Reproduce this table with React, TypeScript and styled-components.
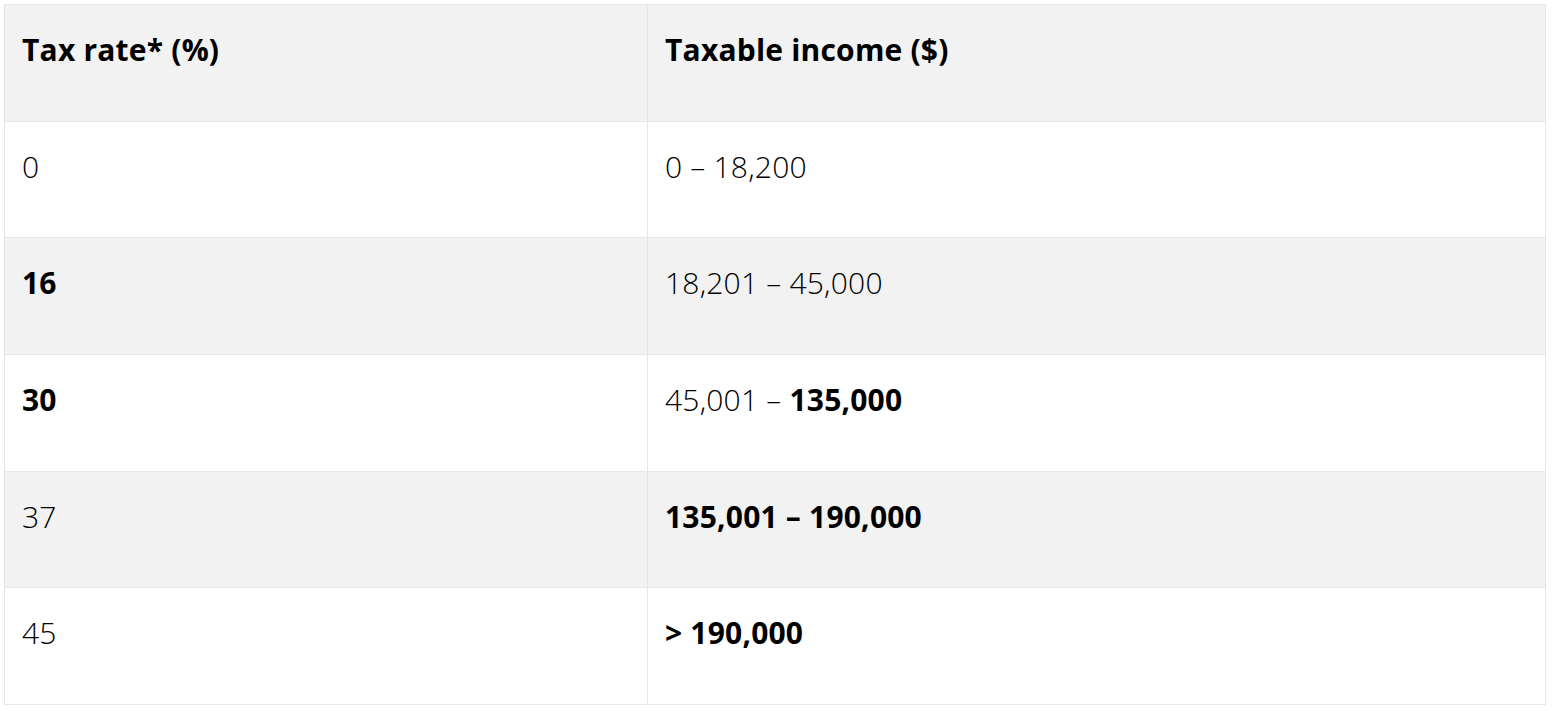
import React from "react";
import styled, { createGlobalStyle } from "styled-components";

const GlobalStyle = createGlobalStyle`
  html, body {
    margin: 0;
    padding: 0;
    background: #ffffff;
  }
  body {
    padding: 4px 7px 6px 4px;
    font-family: "Open Sans", "Noto Sans", "Liberation Sans", sans-serif;
    color: #000000;
  }
`;

const Table = styled.table`
  width: 1542px;
  border-collapse: collapse;
  table-layout: fixed;
  border: 1px solid #e3e6ea;
`;

const Row = styled.tr<{ $shaded?: boolean }>`
  height: 116.67px;
  background: ${(p) => (p.$shaded ? "#f2f2f2" : "#ffffff")};
`;

const Cell = styled.td<{ $wide?: boolean }>`
  box-sizing: border-box;
  width: ${(p) => (p.$wide ? "auto" : "643px")};
  border: 1px solid #e3e6ea;
  vertical-align: top;
  padding: 25px 18px 0 17px;
  font-size: 30px;
  line-height: 40px;
  font-weight: 300;
  letter-spacing: 0.2px;
  white-space: nowrap;
  text-align: left;
`;

const HeadCell = styled(Cell).attrs({ as: "th" })`
  font-weight: 700;
`;

const Strong = styled.b`
  font-weight: 700;
`;

const rows: { rate: React.ReactNode; income: React.ReactNode }[] = [
  { rate: "0", income: "0 – 18,200" },
  { rate: <Strong>16</Strong>, income: "18,201 – 45,000" },
  {
    rate: <Strong>30</Strong>,
    income: (
      <>
        45,001 – <Strong>135,000</Strong>
      </>
    ),
  },
  { rate: "37", income: <Strong>135,001 – 190,000</Strong> },
  { rate: "45", income: <Strong>&gt; 190,000</Strong> },
];

export default function App() {
  return (
    <>
      <GlobalStyle />
      <Table>
        <thead>
          <Row $shaded>
            <HeadCell>Tax rate* (%)</HeadCell>
            <HeadCell $wide>Taxable income ($)</HeadCell>
          </Row>
        </thead>
        <tbody>
          {rows.map((r, i) => (
            <Row key={i} $shaded={i % 2 === 1}>
              <Cell>{r.rate}</Cell>
              <Cell $wide>{r.income}</Cell>
            </Row>
          ))}
        </tbody>
      </Table>
    </>
  );
}
